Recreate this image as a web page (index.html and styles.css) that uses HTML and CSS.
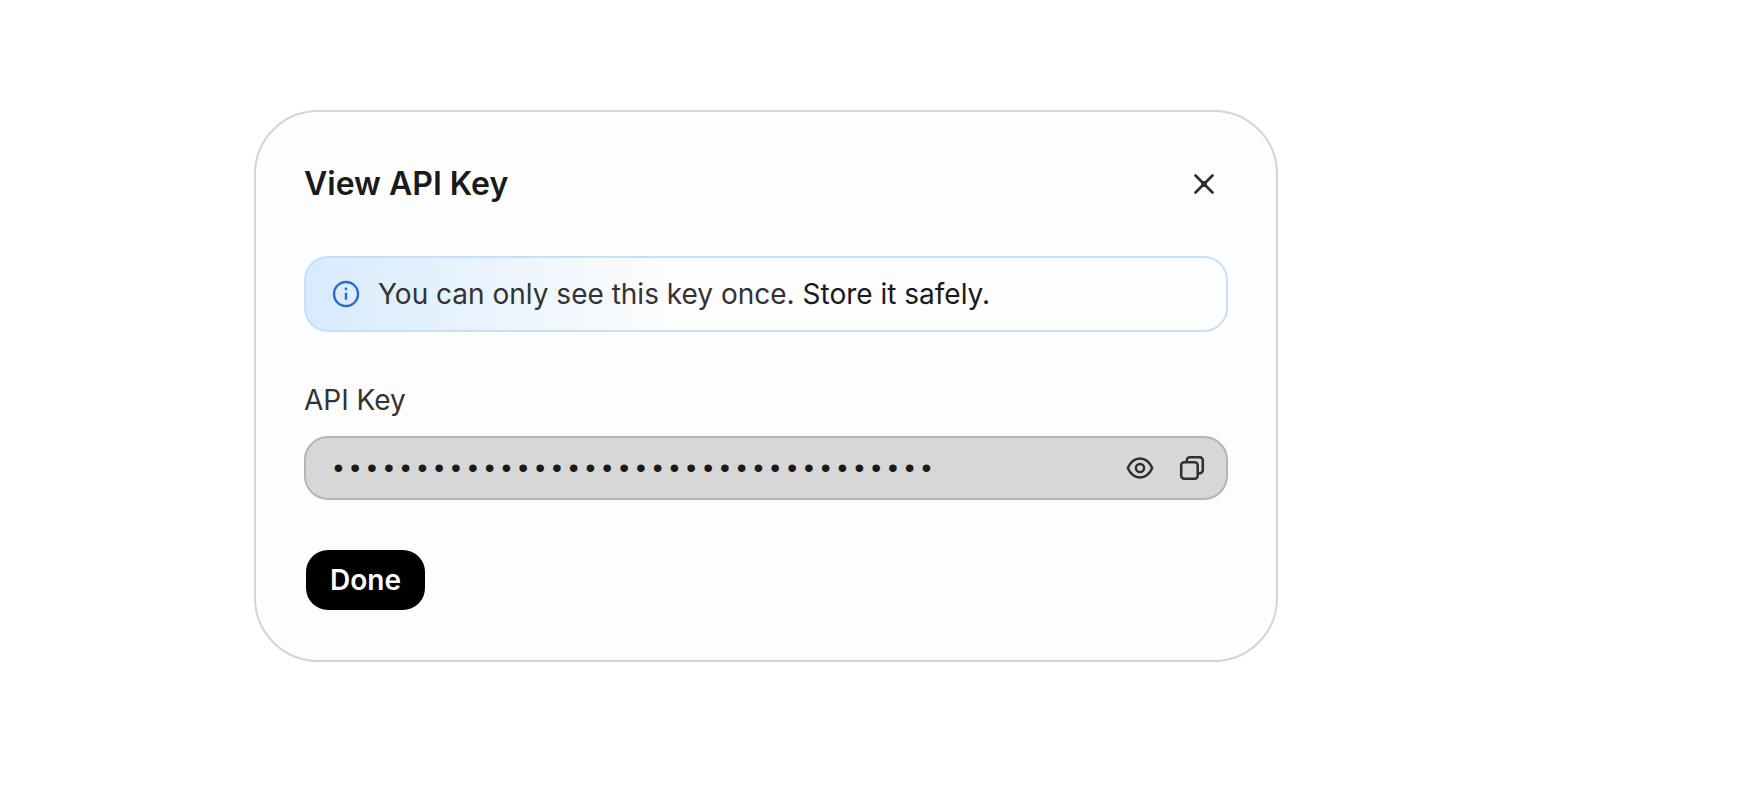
FILE: index.html
```html
<!DOCTYPE html>
<html lang="en">
<head>
    <meta charset="UTF-8">
    <meta name="viewport" content="width=device-width, initial-scale=1.0">
    <title>View API Key</title>
    <link rel="stylesheet" href="styles.css">
</head>
<body>

    <main class="page">
        <section class="card" role="dialog" aria-labelledby="dialogTitle">
            <header class="card-header">
                <h1 id="dialogTitle">View API Key</h1>
                <button type="button" class="icon-btn close-btn" aria-label="Close">
                    <svg width="28" height="28" viewBox="0 0 28 28" fill="none" stroke="currentColor" stroke-width="2.8" stroke-linecap="round" stroke-linejoin="round">
                        <path d="M5.5 5.5l17 17M22.5 5.5l-17 17"/>
                        <path d="M12.5 12.5h3v3h-3z" fill="currentColor"/>
                    </svg>
                </button>
            </header>

            <div class="notice">
                <svg width="28" height="28" viewBox="0 0 28 28" fill="none" stroke="currentColor" stroke-width="2.4">
                    <circle cx="14" cy="14" r="12"/>
                    <path d="M14 12.8v7"/>
                    <circle cx="14" cy="9" r="1.4" fill="currentColor" stroke="none"/>
                </svg>
                <p>You can only see this key once. <strong>Store it safely.</strong></p>
            </div>

            <label for="apiKey">API Key</label>
            <div class="key-field">
                <input type="password" id="apiKey" value="000000000000000000000000000000000000" readonly>
                <button type="button" class="icon-btn" id="toggleKey" aria-label="Show key">
                    <svg width="28" height="28" viewBox="0 0 28 28" fill="none" stroke="currentColor" stroke-width="2.5" stroke-linejoin="round">
                        <path d="M1.8 14C4.4 8.2 8.8 4.5 14 4.5S23.600 8.200 26.200 14C23.600 19.800 19.200 23.500 14 23.500S4.400 19.800 1.800 14z"/>
                        <circle cx="14" cy="14" r="4.100"/>
                    </svg>
                </button>
                <button type="button" class="icon-btn" aria-label="Copy key">
                    <svg width="28" height="28" viewBox="0 0 28 28" fill="none" stroke="currentColor" stroke-width="2.5" stroke-linejoin="round">
                        <rect x="3.200" y="8.300" width="16.500" height="16.500" rx="3"/>
                        <path d="M8.800 8V6.200a3 3 0 0 1 3-3H21.800a3 3 0 0 1 3 3V16.200a3 3 0 0 1-3 3H20"/>
                    </svg>
                </button>
            </div>

            <button type="button" class="done-btn">Done</button>
        </section>
    </main>

    <script>
        // Show or hide the key
        const apiKey = document.getElementById('apiKey');

        document.getElementById('toggleKey').addEventListener('click', function() {
            apiKey.type = apiKey.type === 'password' ? 'text' : 'password';
        });
    </script>
</body>
</html>
```
FILE: styles.css
```css
* {
    box-sizing: border-box;
}

body {
    margin: 0;
    background-color: #fff;
    color: #333;
    font-family: Inter, "Liberation Sans", sans-serif;
    font-size: 28px;
    line-height: 40px;
}

.page {
    max-width: 1278px;
    padding: 110px 0 110px 254px;
}

.card {
    display: flex;
    flex-direction: column;
    padding: 48px;
    border: 2px solid #d4d4d4;
    border-radius: 64px;
    background-color: #fdfdfd;
}

.card-header {
    display: flex;
    justify-content: space-between;
    align-items: center;
    height: 48px;
    margin-bottom: 48px;
}

h1 {
    margin: 0;
    color: #1a1a1a;
    font-size: 32px;
    font-weight: 600;
}

.icon-btn {
    display: flex;
    padding: 0;
    border: none;
    background: none;
    color: #303030;
    cursor: pointer;
}

.close-btn {
    padding: 10px;
}

.notice {
    display: flex;
    align-items: center;
    gap: 18px;
    padding: 16px 26px;
    border: 2px solid #c5e0fa;
    border-radius: 24px;
    background: linear-gradient(90deg, #d7ebfd, #fdfdfd 40%);
    color: #2a6acb;
}

.notice p {
    margin: 0;
    color: #333;
}

.notice strong {
    color: #1a1a1a;
    font-weight: 400;
}

label {
    margin: 48px 0 16px;
}

.key-field {
    display: flex;
    align-items: center;
    gap: 24px;
    height: 64px;
    padding: 0 20px 0 24px;
    border: 2px solid #b4b4b4;
    border-radius: 24px;
    background-color: #d7d7d7;
}

.key-field input {
    flex: 1;
    min-width: 0;
    padding: 2px 0 0;
    border: none;
    outline: none;
    background: none;
    color: #1a1a1a;
    font-family: "Liberation Mono", monospace;
    font-size: 28px;
}

.done-btn {
    align-self: flex-start;
    height: 64px;
    margin-top: 48px;
    padding: 0 24px;
    border: 2px solid transparent;
    border-radius: 24px;
    background: #000 padding-box;
    color: #fff;
    font-family: inherit;
    font-size: 28px;
    font-weight: 600;
    cursor: pointer;
}
```
